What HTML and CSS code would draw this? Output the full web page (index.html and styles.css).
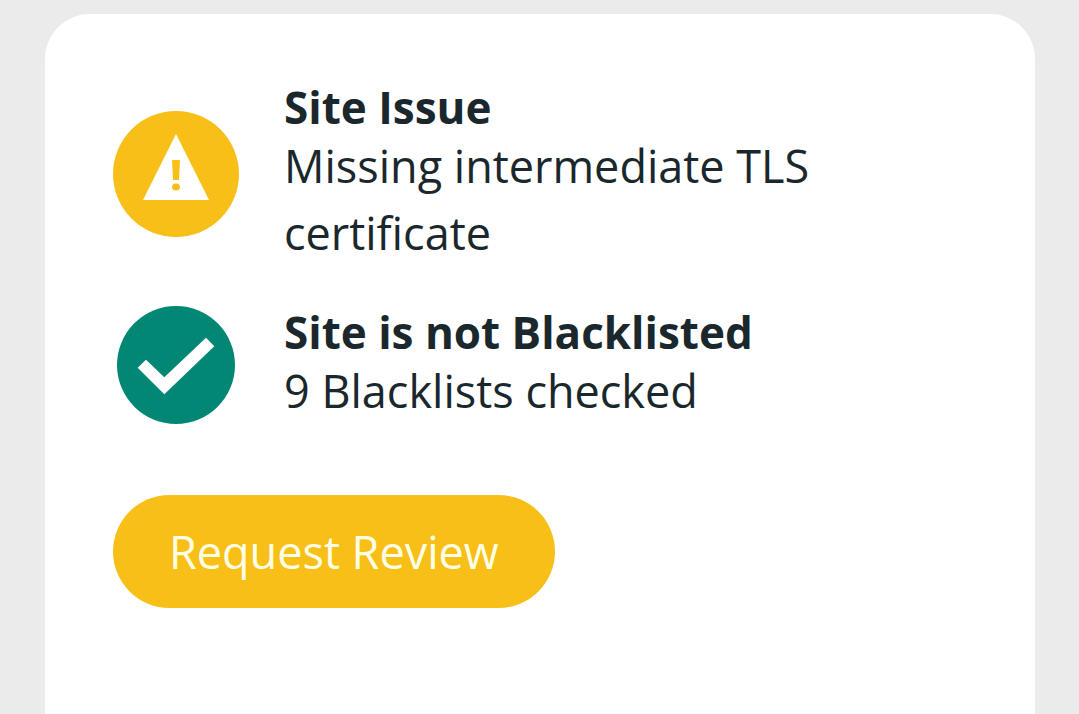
FILE: index.html
```html
<!DOCTYPE html>
<html lang="en">
  <head>
    <meta charset="utf-8" />
    <meta name="viewport" content="width=device-width, initial-scale=1" />
    <title>Site Check</title>
    <link rel="stylesheet" href="styles.css">
  </head>
  <body>
    <main class="card">
      <section class="result">
        <div class="result-icon">
          <svg width="126" height="126" viewBox="0 0 126 126" aria-hidden="true">
            <circle cx="63" cy="63" r="63" fill="#f7bf17" />
            <path d="M63 23 L96 89 H30 Z" fill="#fff" />
            <path d="M59 49 H67 L66 69 H60 Z" fill="#f7bf17" />
            <ellipse cx="63" cy="76" rx="4" ry="3.5" fill="#f7bf17" />
          </svg>
        </div>
        <div class="result-text">
          <h2>Site Issue</h2>
          <p>Missing intermediate TLS certificate</p>
        </div>
      </section>

      <section class="result">
        <div class="result-icon">
          <svg width="118" height="118" viewBox="0 0 118 118" aria-hidden="true">
            <circle cx="59" cy="59" r="59" fill="#028775" />
            <path d="M29 53.7 L20.7 61.7 L47.3 88.3 L97.3 40.3 L89 31.7 L47.3 71.3 Z" fill="#fff" />
          </svg>
        </div>
        <div class="result-text">
          <h2>Site is not Blacklisted</h2>
          <p>9 Blacklists checked</p>
        </div>
      </section>

      <button type="button" class="review-button">Request Review</button>
    </main>
  </body>
</html>
```

FILE: styles.css
```css
* {
  box-sizing: border-box;
}
body {
  margin: 0;
  padding: 14px 44px 0 45px;
  min-height: 100vh;
  display: flex;
  background-color: #ebebeb;
  color: #1a272c;
  font-family: "Open Sans", sans-serif;
}
.card {
  flex: 1;
  padding: 68px;
  background-color: #fff;
  border-radius: 45px 45px 0 0;
}
.result {
  display: flex;
  align-items: center;
  gap: 45px;
  margin-bottom: 40px;
}
.result-icon {
  flex: none;
  display: flex;
  justify-content: center;
  width: 126px;
}
.result-text {
  max-width: 560px;
}
.result h2 {
  margin: 0;
  font-size: 44px;
  line-height: 50px;
  font-weight: 700;
}
.result p {
  margin: 0;
  font-size: 45px;
  line-height: 67px;
}
.review-button {
  margin-top: 31px;
  padding: 0 56px;
  height: 113px;
  border: 0;
  border-radius: 57px;
  background-color: #f7bf17;
  color: #ffffe6;
  font-family: inherit;
  font-size: 45px;
  cursor: pointer;
}
```
